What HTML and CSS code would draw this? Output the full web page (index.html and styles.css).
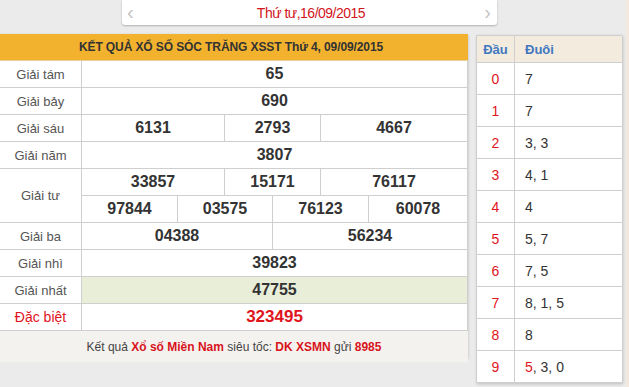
FILE: index.html
```html
<!DOCTYPE html>
<html lang="vi">
<head>
<meta charset="utf-8">
<title>XSST</title>
<link rel="stylesheet" href="styles.css">
</head>
<body>
<div class="datebar">
  <span class="chev">‹</span>
  <span class="date">Thứ tư,16/09/2015</span>
  <span class="chev">›</span>
</div>
<div class="main">
  <div class="result">
    <div class="title">KẾT QUẢ XỔ SỐ SÓC TRĂNG XSST Thứ 4, 09/09/2015</div>

    <div class="lbl">Giải tám</div>
    <div class="num s6">65</div>

    <div class="lbl">Giải bảy</div>
    <div class="num s6">690</div>

    <div class="lbl">Giải sáu</div>
    <div class="num s2">6131</div>
    <div class="num s2">2793</div>
    <div class="num s2">4667</div>

    <div class="lbl">Giải năm</div>
    <div class="num s6">3807</div>

    <div class="lbl tall">Giải tư</div>
    <div class="num s2">33857</div>
    <div class="num s2">15171</div>
    <div class="num s2">76117</div>
    <div class="num">97844</div>
    <div class="num s2">03575</div>
    <div class="num s2">76123</div>
    <div class="num">60078</div>

    <div class="lbl">Giải ba</div>
    <div class="num s3">04388</div>
    <div class="num s3">56234</div>

    <div class="lbl">Giải nhì</div>
    <div class="num s6">39823</div>

    <div class="lbl">Giải nhất</div>
    <div class="num s6 hl">47755</div>

    <div class="lbl red">Đặc biệt</div>
    <div class="num s6 big">323495</div>

    <div class="foot">Kết quả <b>Xổ số Miền Nam</b> siêu tốc: <b>DK XSMN</b> gửi <b>8985</b></div>
  </div>

  <div class="loto">
    <div class="lh">Đầu</div><div class="lh tail">Đuôi</div>
    <div class="hd">0</div><div class="tl">7</div>
    <div class="hd">1</div><div class="tl">7</div>
    <div class="hd">2</div><div class="tl">3, 3</div>
    <div class="hd">3</div><div class="tl">4, 1</div>
    <div class="hd">4</div><div class="tl">4</div>
    <div class="hd">5</div><div class="tl">5, 7</div>
    <div class="hd">6</div><div class="tl">7, 5</div>
    <div class="hd">7</div><div class="tl">8, 1, 5</div>
    <div class="hd">8</div><div class="tl">8</div>
    <div class="hd">9</div><div class="tl"><span class="r">5</span>, 3, 0</div>
  </div>
  <div class="strip"></div>
</div>
</body>
</html>
```
FILE: styles.css
```css
* { box-sizing: border-box; }
html, body { margin: 0; padding: 0; }
body {
  background: #ebebeb;
  font-family: "Liberation Sans", Arial, sans-serif;
  color: #333;
  width: 629px;
  height: 387px;
  overflow: hidden;
}
.datebar {
  margin-left: 122px;
  width: 375px;
  height: 25px;
  background: #fff;
  border-radius: 0 0 3px 3px;
  box-shadow: 0 1px 2px rgba(0,0,0,0.25);
  display: flex;
  align-items: center;
  justify-content: space-between;
  padding: 0 6px 0 5px;
}
.chev {
  color: #c4c4c4;
  font-size: 20px;
  line-height: 20px;
  margin-top: -2px;
}
.date {
  color: #d2141b;
  font-size: 14px;
  letter-spacing: -0.5px;
  margin-left: 4px;
}
.main {
  display: flex;
  align-items: flex-start;
  margin-top: 9px;
}
.result {
  width: 468px;
  display: grid;
  grid-template-columns: 82px 96px 47px 48px 48px 48px 99px;
  grid-auto-rows: 27px;
  background: #fff;
  box-shadow: 0 1px 3px rgba(0,0,0,0.2);
}
.title {
  grid-column: 1 / -1;
  background: #f2b22e;
  border-bottom: 1px solid #e5cf9f;
  display: flex;
  align-items: center;
  justify-content: center;
  font-weight: bold;
  font-size: 12px;
  letter-spacing: -0.1px;
  color: #333;
  padding-right: 6px;
}
.lbl, .num {
  border-right: 1px solid #cfcfcf;
  border-bottom: 1px solid #cfcfcf;
  display: flex;
  align-items: center;
  justify-content: center;
}
.lbl {
  font-size: 13px;
  color: #555;
}
.lbl.tall { grid-row: span 2; }
.lbl.red { color: #e0141c; font-size: 14px; }
.num {
  font-size: 16px;
  font-weight: bold;
  color: #333;
}
.s2 { grid-column: span 2; }
.s3 { grid-column: span 3; }
.s6 { grid-column: span 6; }
.hl { background: #e9eed9; }
.big { color: #e0141c; font-size: 17px; }
.foot {
  grid-column: 1 / -1;
  height: 31px;
  background: #f4f2ef;
  display: flex;
  align-items: center;
  justify-content: center;
  font-size: 12px;
  color: #444;
  white-space: pre;
}
.foot b { color: #d8141c; }
.loto {
  margin-left: 8px;
  margin-top: 1px;
  width: 146px;
  display: grid;
  grid-template-columns: 38px 108px;
  grid-template-rows: 27px;
  grid-auto-rows: 32px;
  background: #fff;
  border-top: 1px solid #cfcfcf;
  border-left: 1px solid #cfcfcf;
  box-shadow: 1px 1px 3px rgba(0,0,0,0.2);
}
.lh, .hd, .tl {
  border-right: 1px solid #cfcfcf;
  border-bottom: 1px solid #cfcfcf;
  display: flex;
  align-items: center;
  font-size: 13px;
}
.lh {
  background: #f4ebdf;
  color: #3f78c0;
  font-weight: bold;
  justify-content: center;
}
.lh.tail { justify-content: flex-start; padding-left: 10px; }
.hd { color: #e0141c; justify-content: center; font-size: 14px; }
.tl { color: #333; padding-left: 10px; font-size: 14px; }
.r { color: #e0141c; }
.strip {
  margin-left: 4px;
  margin-top: -34px;
  width: 3px;
  height: 400px;
  background: #f3e8db;
}
```
